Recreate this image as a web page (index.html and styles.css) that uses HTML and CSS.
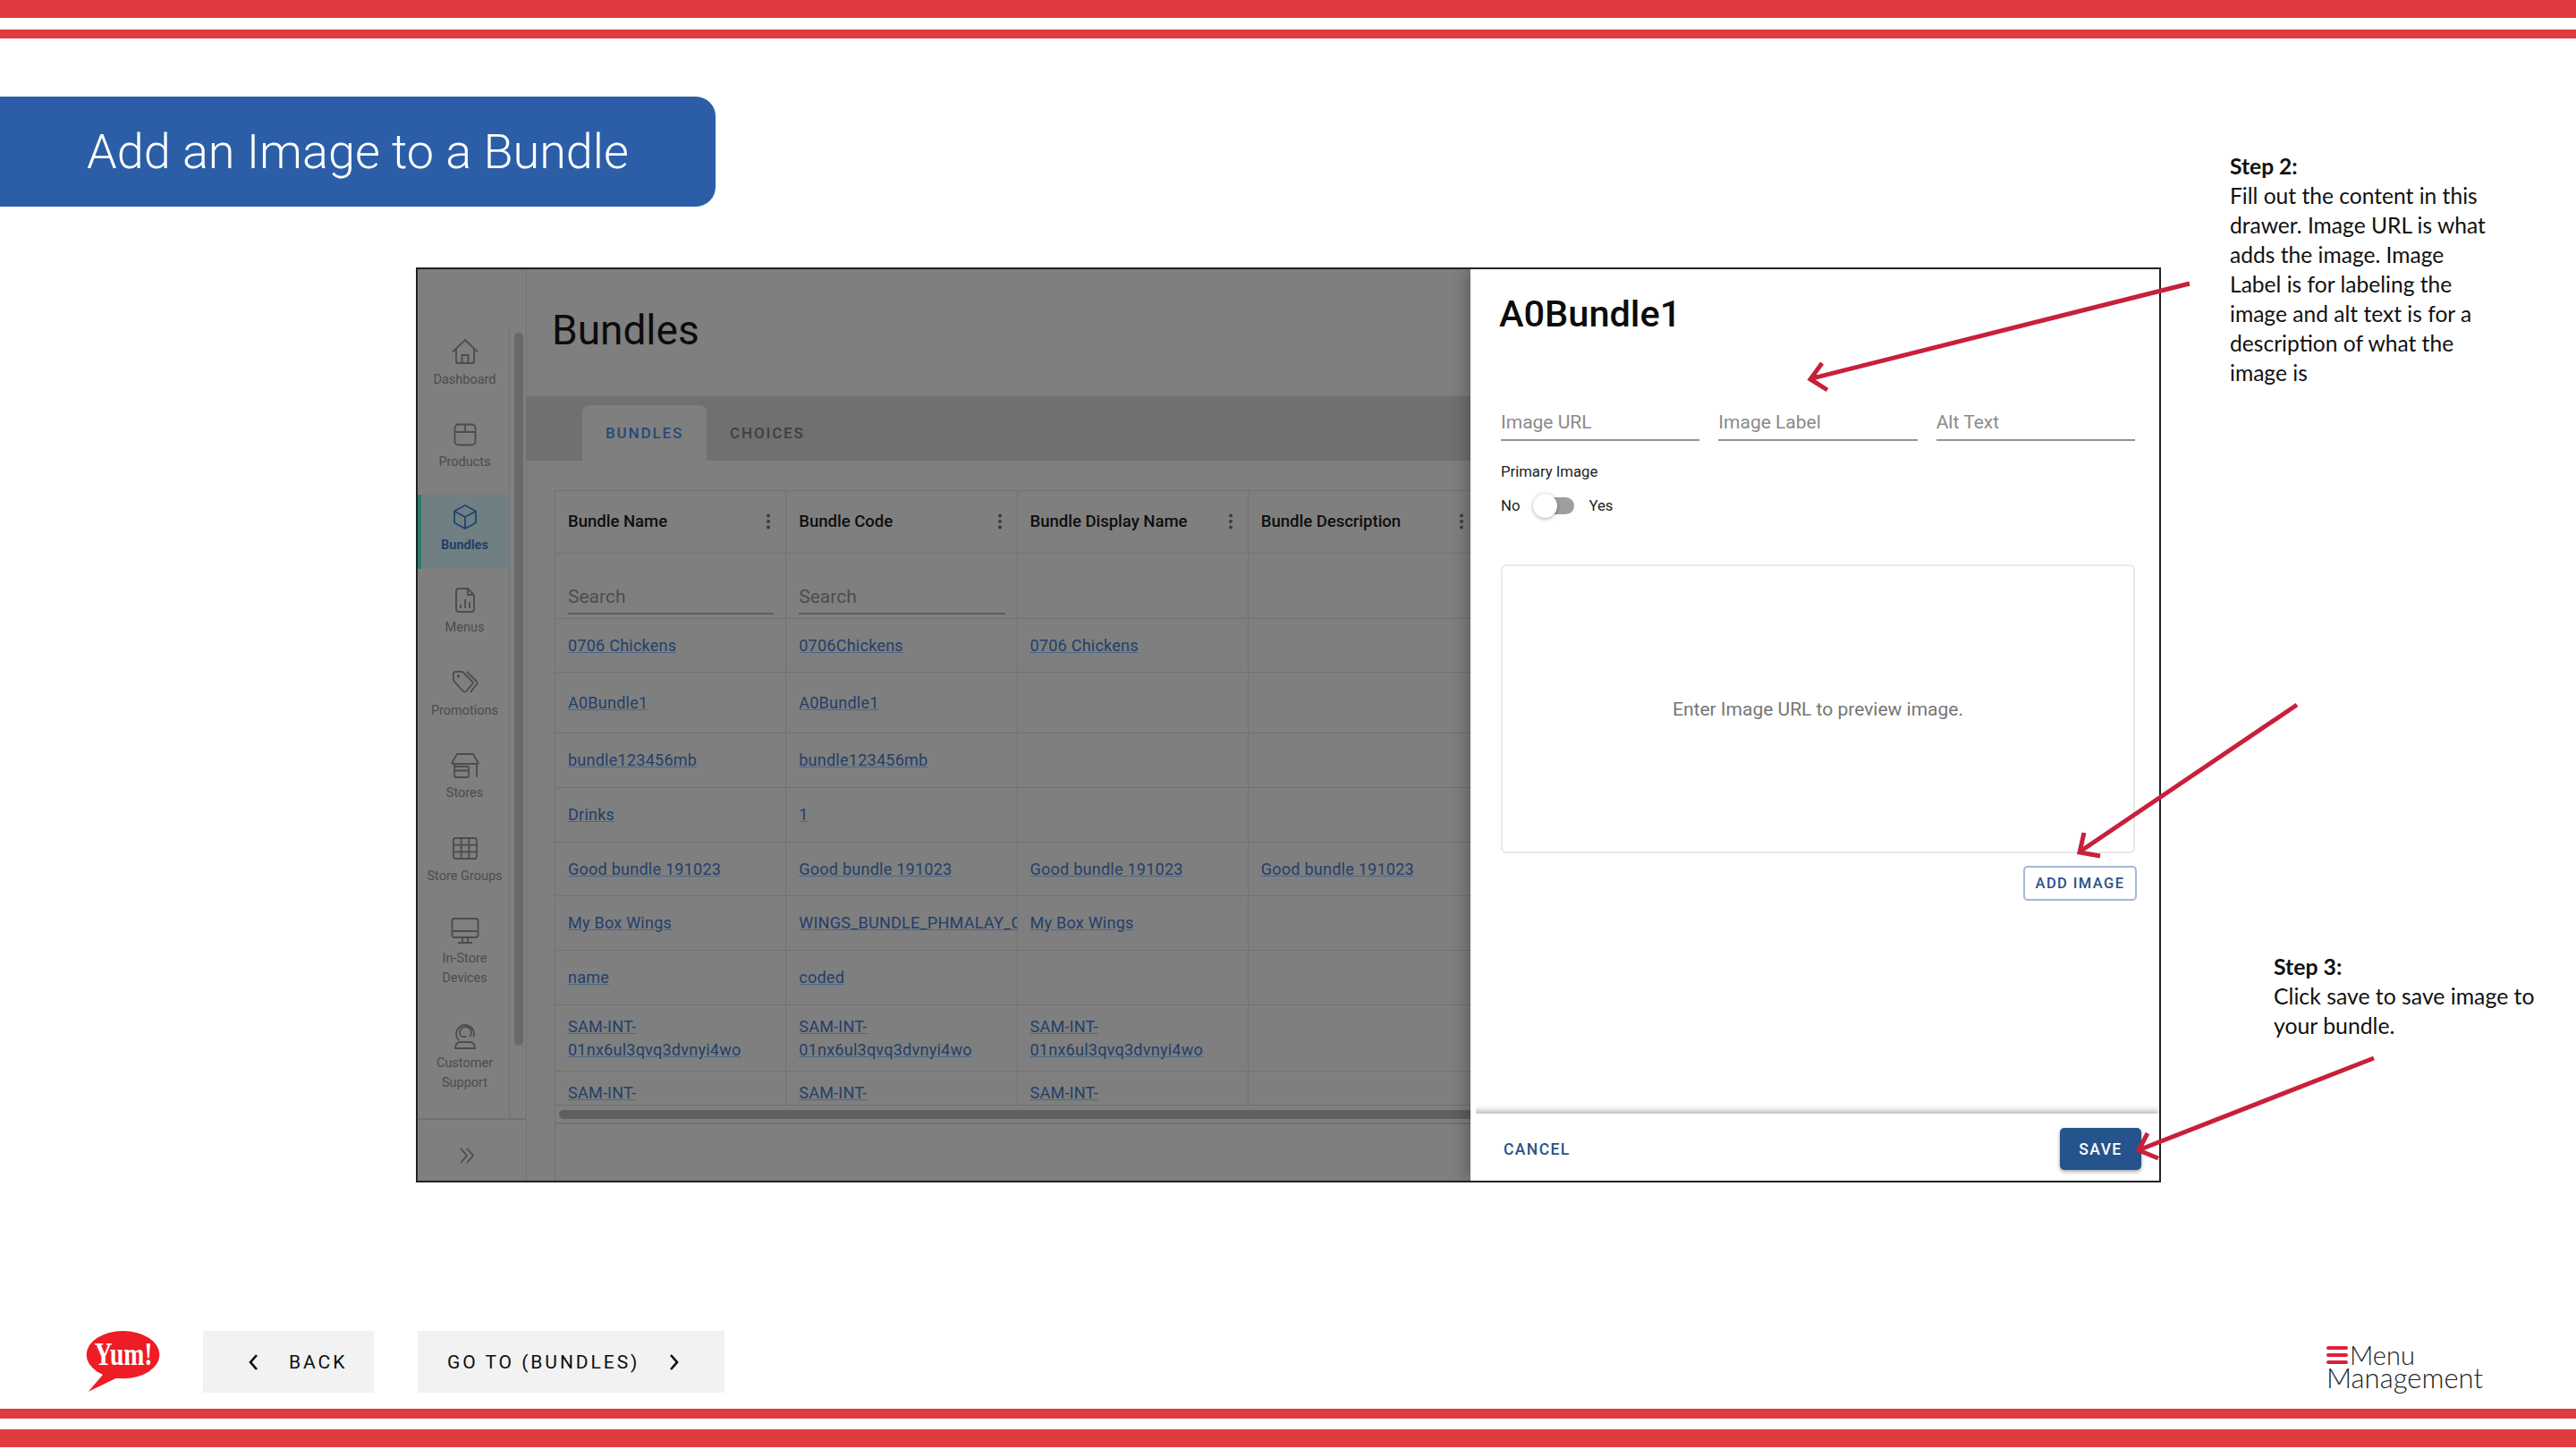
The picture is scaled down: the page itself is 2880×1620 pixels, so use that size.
FILE: index.html
```html
<!DOCTYPE html>
<html lang="en">
<head>
    <meta charset="UTF-8">
    <title>Add an Image to a Bundle</title>
    <link rel="stylesheet" href="styles.css">
</head>
<body>
<div class="slide">

    <div class="bars-top">
        <div class="bar bar-thick"></div>
        <div class="bar bar-thin"></div>
    </div>

    <div class="slide-title">Add an Image to a Bundle</div>

    <div class="frame">
        <div class="app">
            <aside class="rail">
                <div class="rail-top">
                    <nav class="rail-nav">
                        <a class="rail-item">
                            <svg class="rail-icon" viewBox="0 0 32 32"><path d="M2 16.500 16 3l14 13.500M6 13v14a2 2 0 0 0 2 2h16a2 2 0 0 0 2-2V13M12.500 29v-9h7v9"/></svg>
                            <span>Dashboard</span>
                        </a>
                        <a class="rail-item">
                            <svg class="rail-icon" viewBox="0 0 32 32"><rect x="4.500" y="4.500" width="23" height="23" rx="4"/><path d="M4.500 13h23M16 4.500V13"/></svg>
                            <span>Products</span>
                        </a>
                        <a class="rail-item active">
                            <svg class="rail-icon" viewBox="0 0 32 32"><path d="M16 3l12 6.500v13L16 29 4 22.500v-13zM4 9.500 16 16l12-6.500M16 16v13"/></svg>
                            <span>Bundles</span>
                        </a>
                        <a class="rail-item">
                            <svg class="rail-icon" viewBox="0 0 32 32"><path d="M9 3h10l7 7v16a3 3 0 0 1-3 3H9a3 3 0 0 1-3-3V6a3 3 0 0 1 3-3zM19 3v7h7M11 25v-4M16 25V15M21 25v-7"/></svg>
                            <span>Menus</span>
                        </a>
                        <a class="rail-item">
                            <svg class="rail-icon" viewBox="0 0 32 32"><path d="M3 6a2 2 0 0 1 2-2h8l11 11a2 2 0 0 1 0 3l-7 8a2 2 0 0 1-3 0L3 14zM18 4l11 11a2 2 0 0 1 0 3l-7 9"/><circle cx="8.500" cy="9" r=".8"/></svg>
                            <span>Promotions</span>
                        </a>
                        <a class="rail-item">
                            <svg class="rail-icon" viewBox="0 0 32 32"><path d="M7 3h18l5.500 9.500a1 1 0 0 1-1 1.500h-27a1 1 0 0 1-1-1.500zM4 14v13a2 2 0 0 0 2 2h12a2 2 0 0 0 2-2V17M4 21.500h16M4 17h16M29 14v15"/></svg>
                            <span>Stores</span>
                        </a>
                        <a class="rail-item">
                            <svg class="rail-icon" viewBox="0 0 32 32"><rect x="3" y="5" width="26" height="23" rx="2.500"/><path d="M3 12.700h26M3 20.300h26M11.700 5v23M20.300 5v23"/></svg>
                            <span>Store Groups</span>
                        </a>
                        <a class="rail-item tall">
                            <svg class="rail-icon" viewBox="0 0 32 32"><rect x="1.500" y="2" width="29" height="21" rx="2.500"/><path d="M1.500 16h29M13 23v6M19 23v6M8 29h16"/></svg>
                            <span>In-Store<br>Devices</span>
                        </a>
                        <a class="rail-item tall">
                            <svg class="rail-icon" viewBox="0 0 32 32"><path d="M9 21a10 10 0 1 1 16.500-4M12 17a6.500 6.500 0 1 1 9 0M13 17h4M5 30v-1a6 6 0 0 1 6-6h10a6 6 0 0 1 6 6v1z"/></svg>
                            <span>Customer<br>Support</span>
                        </a>
                    </nav>
                    <div class="rail-track"><div class="rail-thumb"></div></div>
                </div>
                <div class="rail-foot">
                    <svg class="rail-expand" viewBox="0 0 20 20"><path d="M3 2l7 8-7 8M10 2l7 8-7 8"/></svg>
                </div>
            </aside>

            <main class="main">
                <h1 class="page-title">Bundles</h1>
                <div class="tabs">
                    <div class="tab active">BUNDLES</div>
                    <div class="tab">CHOICES</div>
                </div>
                <div class="grid-wrap">
                    <table class="grid">
                        <tr class="grid-head">
                            <th><div class="th-in">Bundle Name<i class="dots"></i></div></th>
                            <th><div class="th-in">Bundle Code<i class="dots"></i></div></th>
                            <th><div class="th-in">Bundle Display Name<i class="dots"></i></div></th>
                            <th><div class="th-in">Bundle Description<i class="dots"></i></div></th>
                        </tr>
                        <tr class="grid-search">
                            <td><div class="search">Search</div></td>
                            <td><div class="search">Search</div></td>
                            <td></td>
                            <td></td>
                        </tr>
                        <tr>
                            <td><a>0706 Chickens</a></td>
                            <td><a>0706Chickens</a></td>
                            <td><a>0706 Chickens</a></td>
                            <td></td>
                        </tr>
                        <tr>
                            <td><a>A0Bundle1</a></td>
                            <td><a>A0Bundle1</a></td>
                            <td></td>
                            <td></td>
                        </tr>
                        <tr>
                            <td><a>bundle123456mb</a></td>
                            <td><a>bundle123456mb</a></td>
                            <td></td>
                            <td></td>
                        </tr>
                        <tr>
                            <td><a>Drinks</a></td>
                            <td><a>1</a></td>
                            <td></td>
                            <td></td>
                        </tr>
                        <tr>
                            <td><a>Good bundle 191023</a></td>
                            <td><a>Good bundle 191023</a></td>
                            <td><a>Good bundle 191023</a></td>
                            <td><a>Good bundle 191023</a></td>
                        </tr>
                        <tr>
                            <td><a>My Box Wings</a></td>
                            <td class="clip"><a>WINGS_BUNDLE_PHMALAY_C</a></td>
                            <td><a>My Box Wings</a></td>
                            <td></td>
                        </tr>
                        <tr>
                            <td><a>name</a></td>
                            <td><a>coded</a></td>
                            <td></td>
                            <td></td>
                        </tr>
                        <tr>
                            <td><a>SAM-INT-01nx6ul3qvq3dvnyi4wo</a></td>
                            <td><a>SAM-INT-01nx6ul3qvq3dvnyi4wo</a></td>
                            <td><a>SAM-INT-01nx6ul3qvq3dvnyi4wo</a></td>
                            <td></td>
                        </tr>
                        <tr class="grid-cut">
                            <td><a>SAM-INT-</a></td>
                            <td><a>SAM-INT-</a></td>
                            <td><a>SAM-INT-</a></td>
                            <td></td>
                        </tr>
                    </table>
                    <div class="hscroll"></div>
                    <div class="grid-foot"></div>
                </div>
            </main>
        </div>

        <section class="drawer">
            <div class="drawer-body">
                <h2 class="drawer-title">A0Bundle1</h2>
                <div class="fields">
                    <div class="field">Image URL</div>
                    <div class="field">Image Label</div>
                    <div class="field">Alt Text</div>
                </div>
                <div class="switch-label">Primary Image</div>
                <div class="switch-row">
                    <span>No</span>
                    <div class="switch"><div class="switch-thumb"></div></div>
                    <span>Yes</span>
                </div>
                <div class="preview">Enter Image URL to preview image.</div>
                <button class="btn-outline">ADD IMAGE</button>
            </div>
            <div class="drawer-foot">
                <button class="btn-text">CANCEL</button>
                <button class="btn-save">SAVE</button>
            </div>
        </section>
    </div>

    <div class="footer">
        <svg class="yum" viewBox="0 0 84 70">
            <ellipse cx="42.500" cy="27" rx="41.500" ry="27"/>
            <path d="M22 47l14 6L3 69z"/>
            <text x="10" y="39" textLength="66" lengthAdjust="spacingAndGlyphs">Yum!</text>
        </svg>
        <button class="nav-btn back">
            <svg class="chev" viewBox="0 0 12 20"><path d="M10 2 3 10l7 8"/></svg>
            BACK
        </button>
        <button class="nav-btn next">
            GO TO (BUNDLES)
            <svg class="chev" viewBox="0 0 12 20"><path d="M2 2l7 8-7 8"/></svg>
        </button>
        <div class="mm">
            <div class="mm-top">
                <div class="mm-lines"><i></i><i></i><i></i></div>
                <span>Menu</span>
            </div>
            <div class="mm-bottom">Management</div>
        </div>
    </div>

    <div class="bars-bottom">
        <div class="bar bar-mid"></div>
        <div class="bar bar-wide"></div>
    </div>

    <div class="note note-2">
        <b>Step 2:</b><br>
        Fill out the content in this<br>
        drawer. Image URL is what<br>
        adds the image. Image<br>
        Label is for labeling the<br>
        image and alt text is for a<br>
        description of what the<br>
        image is
    </div>
    <div class="note note-3">
        <b>Step 3:</b><br>
        Click save to save image to<br>
        your bundle.
    </div>

    <!-- red arrows over the screenshot -->
    <svg class="arrows" viewBox="0 0 2880 1620">
        <path d="M2448 317 2026 423M2037 406l-13 18 19 12"/>
        <path d="M2568 788 2327 951M2330 931l-5 22 23 4"/>
        <path d="M2654 1183 2393 1285M2401 1267l-10 19 22 9"/>
    </svg>
</div>
</body>
</html>
```

FILE: styles.css
```css
* {
    box-sizing: border-box;
}
body {
    margin: 0;
    background: #fff;
    font-family: Roboto, "Liberation Sans", sans-serif;
    color: #111;
}
button {
    font-family: inherit;
    cursor: pointer;
}
.slide {
    position: relative;
    width: 2880px;
    height: 1620px;
    overflow: hidden;
    display: flex;
    flex-direction: column;
}

/* red bars */
.bar {
    background: #e03c40;
}
.bar-thick {
    height: 20px;
}
.bar-thin {
    height: 10px;
    margin-top: 13px;
}
.bar-mid {
    height: 11px;
}
.bar-wide {
    height: 20px;
    margin-top: 12px;
}
.bars-bottom {
    margin-top: 18px;
}

.slide-title {
    width: 800px;
    height: 123px;
    margin-top: 65px;
    padding-left: 97px;
    display: flex;
    align-items: center;
    background: #2b5ea7;
    border-radius: 0 22px 22px 0;
    color: #fff;
    font-size: 54px;
    font-weight: 300;
}

/* screenshot */
.frame {
    display: flex;
    width: 1951px;
    height: 1023px;
    margin: 68px 0 0 465px;
    border: 2px solid #222;
    overflow: hidden;
}
.app {
    flex: 1;
    min-width: 0;
    display: flex;
    background: #7f7f7f;
}
.rail {
    width: 122px;
    flex-shrink: 0;
    display: flex;
    flex-direction: column;
    border-right: 1px solid #717171;
}
.rail-top {
    flex: 1;
    display: flex;
    padding-top: 67px;
    border-bottom: 2px solid #717171;
    min-height: 0;
}
.rail-nav {
    width: 103px;
    display: flex;
    flex-direction: column;
    gap: 9.500px;
    border-right: 1px solid #757575;
    overflow: hidden;
}
.rail-item {
    min-height: 83px;
    flex-shrink: 0;
    padding-top: 9px;
    display: flex;
    flex-direction: column;
    align-items: center;
    border-left: 4px solid transparent;
    padding-right: 1px;
    font-size: 14.500px;
    line-height: 22px;
    text-align: center;
    color: #4c4c4c;
}
.rail-item.tall {
    min-height: 107.500px;
}
.rail-item span {
    margin-top: 4.500px;
    white-space: nowrap;
}
.rail-item.active {
    background: #708082;
    border-left-color: #2e7a70;
    color: #1f3f6c;
    font-weight: 700;
}
.rail-icon {
    width: 32px;
    height: 32px;
    fill: none;
    stroke: #4c4c4c;
    stroke-width: 1.800;
}
.rail-item.active .rail-icon {
    stroke: #1f4274;
}
.rail-track {
    flex: 1;
    padding: 4px 0 0 5px;
}
.rail-thumb {
    width: 10px;
    height: 797px;
    background: #696969;
    border-radius: 5px;
}
.rail-foot {
    height: 68px;
    display: flex;
    align-items: center;
    padding: 12px 0 0 45px;
}
.rail-expand {
    width: 20px;
    height: 20px;
    fill: none;
    stroke: #4c4c4c;
    stroke-width: 1.800;
}

.main {
    flex: 1;
    min-width: 0;
    display: flex;
    flex-direction: column;
    overflow: hidden;
}
.page-title {
    height: 142px;
    margin: 0;
    padding: 41px 0 0 28px;
    font-size: 46px;
    font-weight: 400;
    line-height: 54px;
    color: #0c0c0c;
}
.tabs {
    height: 72px;
    padding: 10px 0 0 62px;
    display: flex;
    background: #707070;
}
.tab {
    padding: 0 26px;
    display: flex;
    align-items: center;
    font-size: 17px;
    font-weight: 500;
    letter-spacing: 1.850px;
    color: #3f3f3f;
}
.tab.active {
    background: #7f7f7f;
    border-radius: 8px 8px 0 0;
    color: #264a78;
}
.grid-wrap {
    flex: 1;
    margin: 33px 0 0 31px;
    border-left: 1px solid #717171;
    display: flex;
    flex-direction: column;
}
.grid {
    width: 1033px;
    table-layout: fixed;
    border-collapse: separate;
    border-spacing: 0;
    font-size: 18px;
    line-height: 26px;
}
.grid th,
.grid td {
    padding: 0 14px;
    border-right: 1px solid #717171;
    border-bottom: 1px solid #717171;
    text-align: left;
    vertical-align: middle;
}
.grid a {
    color: #223f69;
    text-decoration: underline;
    text-decoration-color: #4d6788;
    letter-spacing: 0.250px;
}
.grid-head th {
    height: 71px;
    padding-bottom: 2px;
    border-top: 1px solid #717171;
    font-size: 18.500px;
    font-weight: 500;
    color: #0e0e0e;
}
.th-in {
    display: flex;
    align-items: center;
    justify-content: space-between;
    white-space: nowrap;
}
.dots {
    width: 4px;
    height: 4px;
    margin-right: 3px;
    border-radius: 50%;
    background: #3c3c3c;
    box-shadow: 0 -6.500px 0 #3c3c3c, 0 6.500px 0 #3c3c3c;
}
.grid-search td {
    height: 73px;
    padding-top: 34px;
    vertical-align: top;
}
.search {
    height: 34px;
    margin-right: -1px;
    font-size: 21px;
    line-height: 29px;
    color: #4d4d4d;
    border-bottom: 2px solid #5e5e5e;
}
.grid tr:nth-child(3) { height: 60px; }
.grid tr:nth-child(4) { height: 68px; }
.grid tr:nth-child(5) { height: 61px; }
.grid tr:nth-child(6) { height: 61px; }
.grid tr:nth-child(7) { height: 60px; }
.grid tr:nth-child(8) { height: 61px; }
.grid tr:nth-child(9) { height: 61px; }
.grid tr:nth-child(10) { height: 74px; }
.grid-cut td {
    height: 37px;
    padding-top: 11px;
    vertical-align: top;
}
.clip {
    white-space: nowrap;
    overflow: hidden;
}
.grid td.clip {
    padding-right: 0;
}
.hscroll {
    height: 10px;
    margin: 5px 0 0 4px;
    background: #5f5f5f;
    border-radius: 5px 0 0 5px;
}
.grid-foot {
    margin-top: 4px;
    border-top: 2px solid #717171;
}

/* drawer */
.drawer {
    width: 770px;
    flex-shrink: 0;
    display: flex;
    flex-direction: column;
    background: #fff;
    box-shadow: -6px 0 16px rgba(0, 0, 0, 0.22);
    position: relative;
}
.drawer-body {
    flex: 1;
    padding: 25px 27px 0 34px;
    display: flex;
    flex-direction: column;
}
.drawer-title {
    margin: 0 0 0 -2px;
    font-size: 41.500px;
    font-weight: 500;
    line-height: 50px;
    color: #0c0c0c;
}
.fields {
    display: flex;
    gap: 21px;
    margin-top: 82px;
}
.field {
    flex: 1;
    height: 35px;
    font-size: 21px;
    line-height: 28px;
    color: #8a8a8a;
    border-bottom: 2px solid #949494;
}
.switch-label {
    margin-top: 25px;
    font-size: 16.700px;
    line-height: 20px;
    color: #222;
}
.switch-row {
    display: flex;
    align-items: center;
    height: 26px;
    margin-top: 14px;
    font-size: 16.700px;
    color: #222;
}
.switch {
    position: relative;
    width: 45px;
    height: 19px;
    margin: 0 16px;
    border-radius: 10px;
    background: #9e9e9e;
}
.switch-thumb {
    position: absolute;
    left: -1px;
    top: -4px;
    width: 27px;
    height: 27px;
    border-radius: 50%;
    background: #fff;
    box-shadow: 0 1px 4px rgba(0, 0, 0, 0.35);
}
.preview {
    height: 323px;
    margin-top: 53px;
    padding-top: 1px;
    display: flex;
    align-items: center;
    justify-content: center;
    border: 2px solid #e9e9e9;
    border-radius: 6px;
    font-size: 21px;
    color: #767676;
}
.btn-outline {
    align-self: flex-end;
    width: 127px;
    height: 39px;
    margin: 14px -2px 0 0;
    padding: 0;
    background: #fff;
    border: 2px solid #a3b8d6;
    border-radius: 5px;
    font-size: 16.500px;
    font-weight: 500;
    letter-spacing: 1.400px;
    color: #2a5288;
}
.drawer-foot {
    height: 75px;
    padding: 4px 20px 0 37px;
    display: flex;
    align-items: center;
    justify-content: space-between;
    box-shadow: 0 -3px 7px rgba(0, 0, 0, 0.3);
    clip-path: inset(-12px 0 0 6px);
}
.btn-text {
    padding: 0;
    background: none;
    border: none;
    font-size: 17.500px;
    font-weight: 500;
    letter-spacing: 1.400px;
    color: #2a5288;
}
.btn-save {
    width: 91px;
    height: 47px;
    padding: 0;
    background: #25538b;
    border: none;
    border-radius: 5px;
    box-shadow: 0 2px 4px rgba(0, 0, 0, 0.35);
    font-size: 17.500px;
    font-weight: 500;
    letter-spacing: 1.400px;
    color: #fff;
}

/* slide footer */
.footer {
    height: 69px;
    margin-top: 166px;
    padding: 0 105px 0 95px;
    display: flex;
}
.yum {
    width: 84px;
    height: 69px;
    flex-shrink: 0;
    overflow: visible;
    fill: #ee1c25;
}
.yum text {
    font-family: "Liberation Serif", serif;
    font-size: 36px;
    font-weight: 700;
    fill: #fff;
}
.nav-btn {
    height: 69px;
    display: flex;
    align-items: center;
    background: #f2f2f2;
    border: none;
    padding: 0;
    font-size: 21px;
    letter-spacing: 2.950px;
    color: #0d0d0d;
}
.back {
    width: 191px;
    margin-left: 48px;
    padding-left: 50px;
    gap: 34px;
}
.next {
    width: 343px;
    margin-left: 49px;
    padding-left: 33px;
    gap: 33px;
}
.chev {
    width: 12px;
    height: 20px;
    fill: none;
    stroke: #0d0d0d;
    stroke-width: 2.600;
}
.mm {
    margin-left: auto;
    width: 174px;
    font-family: Lato, sans-serif;
    font-weight: 300;
    font-size: 31px;
    line-height: 26px;
    color: #222;
}
.mm-top {
    display: flex;
    align-items: flex-start;
    gap: 2px;
    margin-top: 14px;
    font-size: 29px;
}
.mm-lines {
    width: 24px;
    margin-top: 3px;
    display: flex;
    flex-direction: column;
    gap: 4.500px;
}
.mm-lines i {
    height: 3.500px;
    background: #e01f3d;
    border-radius: 2px;
}
.mm-bottom {
    margin-top: -1px;
    white-space: nowrap;
}

/* notes and arrows */
.note {
    position: absolute;
    font-family: Lato, sans-serif;
    font-size: 24.600px;
    line-height: 33px;
    color: #111;
    white-space: nowrap;
}
.note-2 {
    left: 2493px;
    top: 168.500px;
}
.note-3 {
    left: 2542px;
    top: 1063.500px;
    font-size: 24.800px;
}
.arrows {
    position: absolute;
    left: 0;
    top: 0;
    width: 2880px;
    height: 1620px;
    pointer-events: none;
    fill: none;
    stroke: #c8203a;
    stroke-width: 5;
}
```
